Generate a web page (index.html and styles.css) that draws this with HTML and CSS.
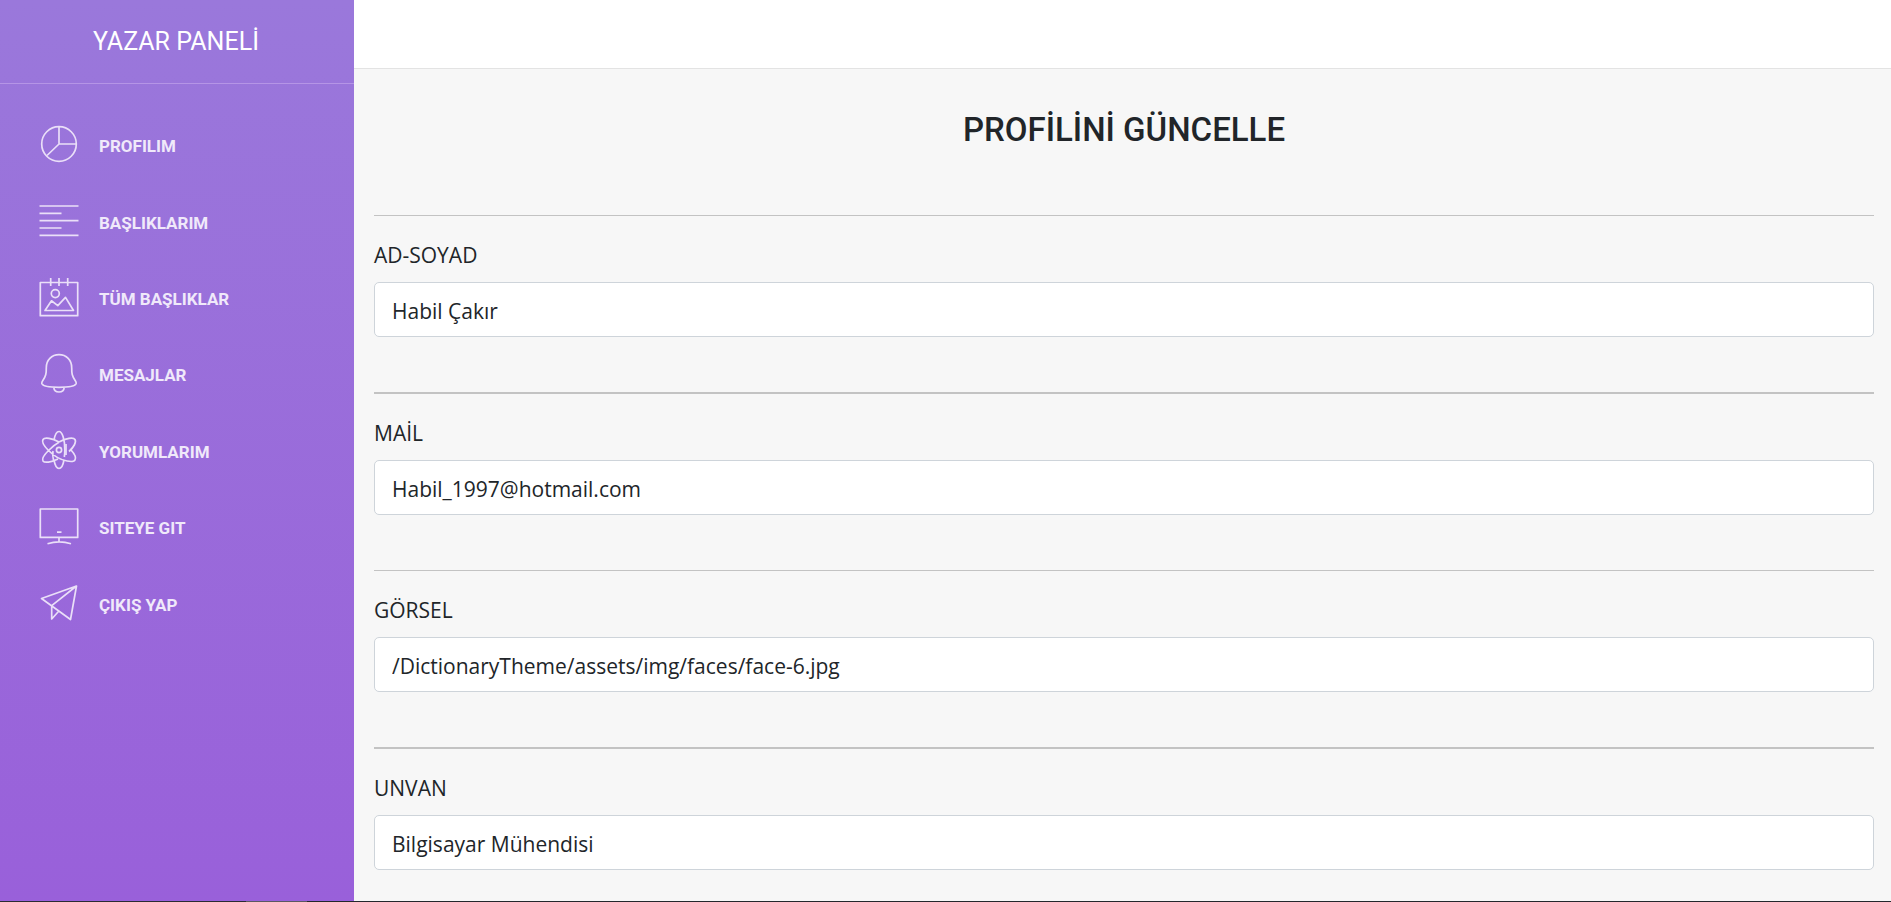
FILE: index.html
```html
<!DOCTYPE html>
<html lang="tr">
<head>
<meta charset="utf-8">
<title>Yazar Paneli</title>
<link rel="stylesheet" href="styles.css">
</head>
<body>
<div class="layout">
  <aside class="sidebar">
    <div class="brand"><a href="#">YAZAR PANELİ</a></div>
    <nav class="menu">
      <a class="menu-item" href="#">
        <svg class="icon" viewBox="0 0 40 40"><circle cx="20" cy="20" r="17.3"/><path d="M20 2.7V20H37.3M20 20L8 31.5"/></svg>
        <span>PROFILIM</span></a>
      <a class="menu-item" href="#">
        <svg class="icon" viewBox="0 0 40 40"><path d="M.5 5h39M.5 12.400h22M.5 19.700h39M.5 27h22M.5 34.400h39"/></svg>
        <span>BAŞLIKLARIM</span></a>
      <a class="menu-item" href="#">
        <svg class="icon" viewBox="0 0 40 40"><path d="M1.3 5.5h37.4v33.2H1.3zM11.7 1v8M20 1v8M28.7 1v8M6 33.5l6.5-9.7 6.3 4.8 7.7-8.2 8 13.1z"/><circle cx="16.3" cy="16.6" r="4"/></svg>
        <span>TÜM BAŞLIKLAR</span></a>
      <a class="menu-item" href="#">
        <svg class="icon" viewBox="0 0 40 40"><path d="M20 1.7c7.5 0 12.7 5.6 12.7 13 0 6 .3 8 3.3 12.5 1 1.5 1.5 2.3 1.2 3.3C36.3 33 28.5 34.3 20 34.3S3.7 33 2.8 30.500C2.500 29.500 3 28.700 4 27.200 7 22.700 7.300 20.700 7.300 14.700 7.300 7.300 12.500 1.700 20 1.700zM14.800 34.500c.4 6 10 6 10.400 0"/></svg>
        <span>MESAJLAR</span></a>
      <a class="menu-item" href="#">
        <svg class="icon" viewBox="0 0 40 40"><path d="M15 10C16 4.500 18 1.500 20 1.500c3.300 0 5.800 8 5.800 18.500 0 2.500-.2 5-.5 7M15 30c1 5.500 3 8.500 5 8.500s4-3 5-8.500"/><path d="M20 12C13 8 5.500 7 4 9.500 2.500 12 5 16 9.500 20.500 15 26 22 30 28 31c4 .8 7.200.5 8-1.200 1.300-2.300-.5-6-4-9.800M20 12c7-4 14.500-5 16-2.500C37.500 12 35 17 30 21.500M9.500 20.500C5 25 2.500 28.500 4 31c1.500 2 8 1.500 15-2M14.500 30c-.8-3-1-6-.5-9"/><path d="M9.500 20.500C12.500 17.500 16 14.500 20 12.300M27 14v11"/><circle cx="20" cy="20" r="2.600"/></svg>
        <span>YORUMLARIM</span></a>
      <a class="menu-item" href="#">
        <svg class="icon" viewBox="0 0 40 40"><path d="M1.3 3h37.4v28.4H1.3zM18 26.2h4.5M20 31.4v4.5M8.5 37.700c7-2.200 16.500-2.200 23.500 0"/></svg>
        <span>SITEYE GIT</span></a>
      <a class="menu-item" href="#">
        <svg class="icon" viewBox="0 0 40 40"><path d="M37.5 3L2.5 15.5 31.5 36.500zM37.500 3L12.700 22.700V36l7.200-8"/></svg>
        <span>ÇIKIŞ YAP</span></a>
    </nav>
  </aside>
  <div class="main">
    <header class="topbar"></header>
    <main class="content">
      <h1 class="title">PROFİLİNİ GÜNCELLE</h1>
      <form class="form">
        <div class="field"><label for="name">AD-SOYAD</label><input id="name" type="text" value="Habil Çakır"></div>
        <div class="field"><label for="mail">MAİL</label><input id="mail" type="text" value="Habil_1997@hotmail.com"></div>
        <div class="field"><label for="image">GÖRSEL</label><input id="image" type="text" value="/DictionaryTheme/assets/img/faces/face-6.jpg"></div>
        <div class="field"><label for="role">UNVAN</label><input id="role" type="text" value="Bilgisayar Mühendisi"></div>
      </form>
    </main>
  </div>
</div>
<footer class="edge"></footer>
</body>
</html>
```
FILE: styles.css
```css
* { box-sizing: border-box; }

body {
  display: flex;
  flex-direction: column;
  min-height: 100vh;
  margin: 0;
  background: #f7f7f7;
  color: #212529;
  font-family: Roboto, "Liberation Sans", sans-serif;
}

.layout {
  display: flex;
  flex: 1;
}

.sidebar {
  flex: 0 0 354px;
  background: linear-gradient(#9a78db, #9960da);
}

.brand {
  display: flex;
  align-items: center;
  height: 84px;
  padding-left: 93px;
  border-bottom: 1px solid #b595e6;
}

.brand a {
  color: #fff;
  font-size: 25px;
  line-height: 40px;
  text-decoration: none;
}

.menu {
  display: grid;
  grid-auto-rows: 1fr;
  height: 557px;
  padding: 22px 39px 0;
}

.menu-item {
  display: flex;
  align-items: center;
  gap: 20px;
  color: #f0e9fa;
  font-size: 17px;
  font-weight: 700;
  line-height: 24px;
  text-decoration: none;
}

.menu-item span { padding-top: 4px; }

.icon {
  width: 40px;
  height: 40px;
  fill: none;
  stroke: #eadff8;
  stroke-width: 1.7;
  stroke-linejoin: round;
}

.main {
  display: flex;
  flex: 1;
  flex-direction: column;
}

.topbar {
  height: 69px;
  background: #fff;
  border-bottom: 1px solid #e3e3e3;
}

.content { padding: 41px 17px 0 20px; }

.title {
  margin: 0 0 65px;
  font-size: 33px;
  font-weight: 500;
  line-height: 40px;
  text-align: center;
}

.field {
  display: flex;
  flex-direction: column;
  padding: 22px 0 55px;
  border-top: 1px solid #c3c3c3;
  font-family: "Open Sans", "Noto Sans", sans-serif;
  font-size: 21px;
}

.field:nth-child(even) { border-top-width: 2px; }

.field:last-child { padding-bottom: 30px; }

.field label {
  margin-bottom: 10px;
  line-height: 34px;
}

.field input {
  height: 55px;
  padding: 2px 17px 0;
  background: #fff;
  border: 1px solid #ced4da;
  border-radius: 5px;
  color: #212529;
  font: inherit;
}

.edge {
  height: 1px;
  background: linear-gradient(90deg, #2b2b33 246px, #5c5862 246px 307px, #24272c 307px);
}
```
